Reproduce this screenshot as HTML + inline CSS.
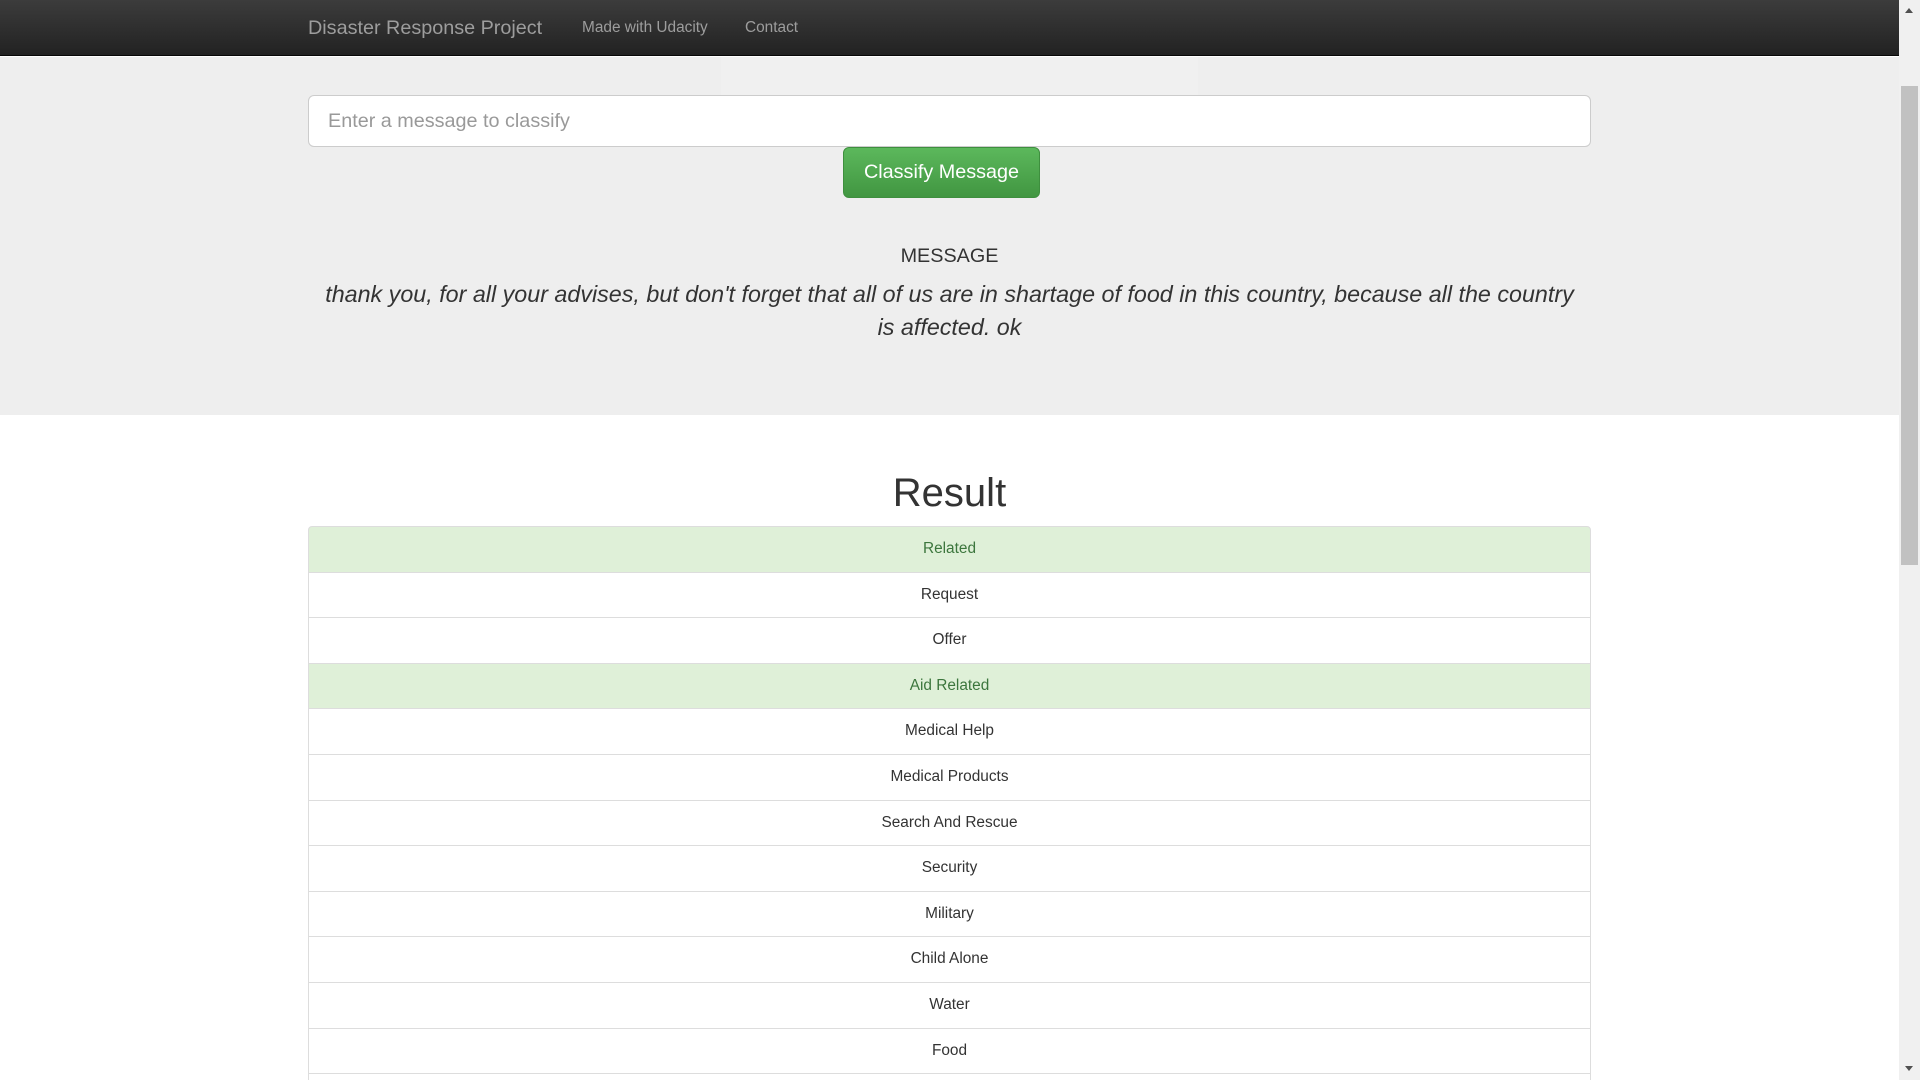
<!DOCTYPE html>
<html><head><meta charset="utf-8"><style>
*{box-sizing:border-box;margin:0;padding:0}
html,body{width:1920px;height:1080px;overflow:hidden;background:#fff;font-family:"Liberation Sans",Arial,sans-serif;color:#333}
.page{position:absolute;left:0;top:0;width:1899px;height:1080px;overflow:hidden}
.nav{position:absolute;left:0;top:0;width:1899px;height:56px;background:linear-gradient(#3c3c3c,#222);border-bottom:1px solid #080808}
.brand{position:absolute;left:308px;top:17px;font-size:19.8px;color:#9d9d9d}
.nl{position:absolute;top:19px;font-size:15.4px;color:#9d9d9d}
.jumbo{position:absolute;left:0;top:57px;width:1899px;height:358px;background:#eee}
.ghost{position:absolute;left:721px;top:0;width:477px;height:62px;background:#f0f0f0}
.inp{position:absolute;left:308px;top:95px;width:1283px;height:52px;background:#fff;border:1px solid #ccc;border-radius:6px;font-size:19.8px;color:#999;padding:12px 19px;line-height:26px}
.btn{position:absolute;left:843px;top:147px;width:197px;height:51px;border-radius:6px;background:linear-gradient(#5cb85c,#419641);border:1px solid #3e8f3e;color:#fff;font-size:19.8px;text-align:center;line-height:49px}
.msgh{position:absolute;left:308px;width:1283px;top:245px;text-align:center;font-size:19.8px;color:#333}
.msg{position:absolute;left:308px;width:1283px;top:278px;text-align:center;font-size:23.3px;font-style:italic;line-height:33px;color:#333;white-space:nowrap}
.res{position:absolute;left:308px;width:1283px;top:468px;text-align:center;font-size:40px;line-height:50px;color:#333}
.list{position:absolute;left:308px;width:1283px;top:526px}
.li{height:46.6px;border:1px solid #ddd;margin-bottom:-1px;background:#fff;text-align:center;font-size:15.4px;line-height:44.6px;color:#333}
.li:first-child{border-radius:4px 4px 0 0}
.g{background:#dff0d8;color:#3c763d}
.sb{position:absolute;left:1899px;top:0;width:21px;height:1080px;background:#f0f0f0}
.th{position:absolute;left:2px;top:86px;width:17px;height:479px;background:#c1c1c1}
.ar{position:absolute;left:6px;width:0;height:0;border-left:4.5px solid transparent;border-right:4.5px solid transparent}
</style></head><body>
<div class="page">
<div class="jumbo">
<div class="ghost"></div>
</div>
<div class="nav">
<div class="brand">Disaster Response Project</div>
<div class="nl" style="left:582px">Made with Udacity</div>
<div class="nl" style="left:745px">Contact</div>
</div>
<div class="inp">Enter a message to classify</div>
<div class="btn">Classify Message</div>
<div class="msgh">MESSAGE</div>
<div class="msg">thank you, for all your advises, but don't forget that all of us are in shartage of food in this country, because all the country<br>is affected. ok</div>
<div class="res">Result</div>
<div class="list">
<div class="li g">Related</div>
<div class="li">Request</div>
<div class="li">Offer</div>
<div class="li g">Aid Related</div>
<div class="li">Medical Help</div>
<div class="li">Medical Products</div>
<div class="li">Search And Rescue</div>
<div class="li">Security</div>
<div class="li">Military</div>
<div class="li">Child Alone</div>
<div class="li">Water</div>
<div class="li">Food</div>
<div class="li">Shelter</div>
</div>
</div>
<div class="sb">
<div class="ar" style="top:8px;border-bottom:5px solid #505050"></div>
<div class="th"></div>
<div class="ar" style="top:1066px;border-top:5px solid #505050"></div>
</div>
</body></html>
